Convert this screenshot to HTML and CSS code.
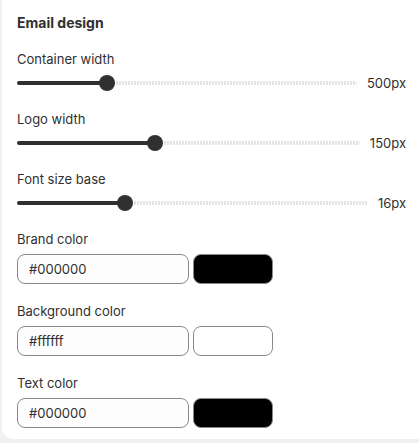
FILE: index.html
```html
<!DOCTYPE html>
<html>
<head>
	<meta charset="UTF-8">
	<title>Email design</title>
	<link rel="stylesheet" href="styles.css">
</head>
<body>
	<div class="card">
		<h2 class="card-title">Email design</h2>

		<div class="field">
			<label class="field-label">Container width</label>
			<div class="range">
				<div class="range-track">
					<div class="range-fill" style="width:26.4%"></div>
					<div class="range-thumb" style="left:26.4%"></div>
				</div>
				<span class="range-value">500px</span>
			</div>
		</div>

		<div class="field">
			<label class="field-label">Logo width</label>
			<div class="range">
				<div class="range-track">
					<div class="range-fill" style="width:40.2%"></div>
					<div class="range-thumb" style="left:40.2%"></div>
				</div>
				<span class="range-value">150px</span>
			</div>
		</div>

		<div class="field">
			<label class="field-label">Font size base</label>
			<div class="range">
				<div class="range-track">
					<div class="range-fill" style="width:30.8%"></div>
					<div class="range-thumb" style="left:30.8%"></div>
				</div>
				<span class="range-value">16px</span>
			</div>
		</div>

		<div class="field field-color">
			<label class="field-label">Brand color</label>
			<div class="color">
				<input class="color-input" type="text" value="#000000">
				<span class="color-swatch" style="background:#000000"></span>
			</div>
		</div>

		<div class="field field-color">
			<label class="field-label">Background color</label>
			<div class="color">
				<input class="color-input" type="text" value="#ffffff">
				<span class="color-swatch" style="background:#ffffff"></span>
			</div>
		</div>

		<div class="field field-color">
			<label class="field-label">Text color</label>
			<div class="color">
				<input class="color-input" type="text" value="#000000">
				<span class="color-swatch" style="background:#000000"></span>
			</div>
		</div>
	</div>
</body>
</html>
```

FILE: styles.css
```css
html, body {margin:0; padding:0;}
body {background:#f1f1f1; font:13px/20px Inter, "Noto Sans", sans-serif; color:#303030;}

.card {margin:0 0 4px 2px; padding:13px 13px 11px 15px; background:#fff; border-bottom-left-radius:12px;}
	.card-title {margin:0; font-size:14px; line-height:20px; font-weight:650;}

.field {display:flex; flex-direction:column; gap:6px; margin-top:18px;}
.card-title + .field {margin-top:16px;}
.field-color {gap:5px; margin-top:17px;}
.range + .field-color, .field + .field-color:nth-child(5) {margin-top:18px;}
	.field-label {display:block; line-height:20px;}

.range {display:flex; align-items:center; gap:10px; height:16px;}
	.range-track {position:relative; flex:1; height:4px; border-radius:2px;
		background:repeating-linear-gradient(90deg, #e3e3e3 0, #e3e3e3 2px, transparent 2px, transparent 3px);}
	.range-fill {height:100%; background:#303030; border-radius:2px;}
	.range-thumb {position:absolute; top:50%; width:16px; height:16px; margin:-8px 0 0 -8px; border-radius:50%; background:#303030;}
	.range-value {line-height:16px;}

.color {display:flex; gap:4px;}
	.color-input {box-sizing:border-box; width:172px; height:30px; padding:0 11px; margin:0;
		border:1px solid #8a8a8a; border-radius:8px; background:#fdfdfd;
		font:13px Inter, "Noto Sans", sans-serif; color:#303030; outline:none;}
	.color-swatch {box-sizing:border-box; width:80px; height:30px; border:1px solid #8a8a8a; border-radius:8px;}
```
